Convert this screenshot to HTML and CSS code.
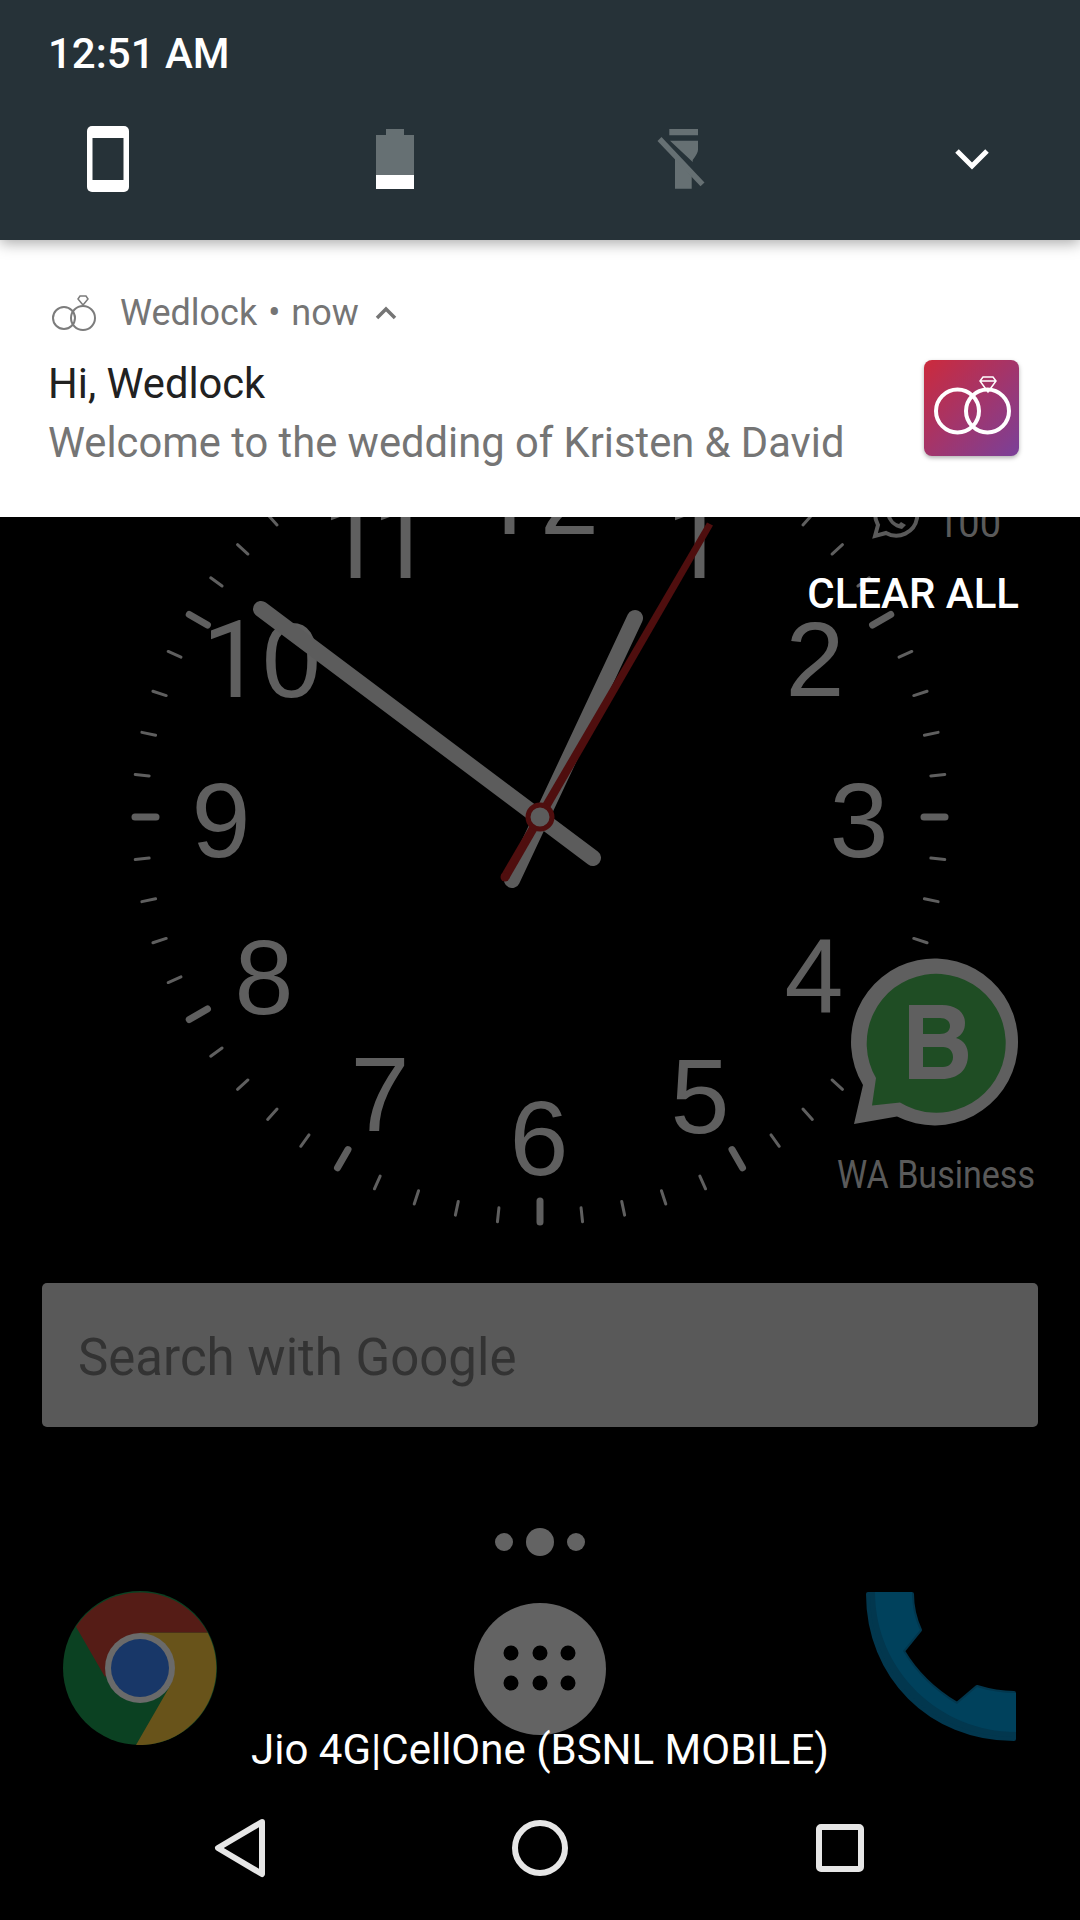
FILE: index.html
```html
<!DOCTYPE html>
<html lang="en">
<head>
<meta charset="utf-8">
<title>Notification shade</title>
<link rel="stylesheet" href="styles.css">
</head>
<body>
<div class="screen">
  <div class="home">
    <svg class="wallpaper" viewBox="0 0 1080 1283" width="1080" height="1283">
      <defs>
        <line id="tick" class="tick" x1="540" y1="410" x2="540" y2="424"/>
        <line id="hourtick" class="hourtick" x1="540" y1="412" x2="540" y2="433"/>
      </defs>
      <g>
        <use href="#hourtick" transform="rotate(0 540 817)"/><use href="#tick" transform="rotate(6 540 817)"/><use href="#tick" transform="rotate(12 540 817)"/><use href="#tick" transform="rotate(18 540 817)"/><use href="#tick" transform="rotate(24 540 817)"/>
        <use href="#hourtick" transform="rotate(30 540 817)"/><use href="#tick" transform="rotate(36 540 817)"/><use href="#tick" transform="rotate(42 540 817)"/><use href="#tick" transform="rotate(48 540 817)"/><use href="#tick" transform="rotate(54 540 817)"/>
        <use href="#hourtick" transform="rotate(60 540 817)"/><use href="#tick" transform="rotate(66 540 817)"/><use href="#tick" transform="rotate(72 540 817)"/><use href="#tick" transform="rotate(78 540 817)"/><use href="#tick" transform="rotate(84 540 817)"/>
        <use href="#hourtick" transform="rotate(90 540 817)"/><use href="#tick" transform="rotate(96 540 817)"/><use href="#tick" transform="rotate(102 540 817)"/><use href="#tick" transform="rotate(108 540 817)"/><use href="#tick" transform="rotate(114 540 817)"/>
        <use href="#hourtick" transform="rotate(120 540 817)"/><use href="#tick" transform="rotate(126 540 817)"/><use href="#tick" transform="rotate(132 540 817)"/><use href="#tick" transform="rotate(138 540 817)"/><use href="#tick" transform="rotate(144 540 817)"/>
        <use href="#hourtick" transform="rotate(150 540 817)"/><use href="#tick" transform="rotate(156 540 817)"/><use href="#tick" transform="rotate(162 540 817)"/><use href="#tick" transform="rotate(168 540 817)"/><use href="#tick" transform="rotate(174 540 817)"/>
        <use href="#hourtick" transform="rotate(180 540 817)"/><use href="#tick" transform="rotate(186 540 817)"/><use href="#tick" transform="rotate(192 540 817)"/><use href="#tick" transform="rotate(198 540 817)"/><use href="#tick" transform="rotate(204 540 817)"/>
        <use href="#hourtick" transform="rotate(210 540 817)"/><use href="#tick" transform="rotate(216 540 817)"/><use href="#tick" transform="rotate(222 540 817)"/><use href="#tick" transform="rotate(228 540 817)"/><use href="#tick" transform="rotate(234 540 817)"/>
        <use href="#hourtick" transform="rotate(240 540 817)"/><use href="#tick" transform="rotate(246 540 817)"/><use href="#tick" transform="rotate(252 540 817)"/><use href="#tick" transform="rotate(258 540 817)"/><use href="#tick" transform="rotate(264 540 817)"/>
        <use href="#hourtick" transform="rotate(270 540 817)"/><use href="#tick" transform="rotate(276 540 817)"/><use href="#tick" transform="rotate(282 540 817)"/><use href="#tick" transform="rotate(288 540 817)"/><use href="#tick" transform="rotate(294 540 817)"/>
        <use href="#hourtick" transform="rotate(300 540 817)"/><use href="#tick" transform="rotate(306 540 817)"/><use href="#tick" transform="rotate(312 540 817)"/><use href="#tick" transform="rotate(318 540 817)"/><use href="#tick" transform="rotate(324 540 817)"/>
        <use href="#hourtick" transform="rotate(330 540 817)"/><use href="#tick" transform="rotate(336 540 817)"/><use href="#tick" transform="rotate(342 540 817)"/><use href="#tick" transform="rotate(348 540 817)"/><use href="#tick" transform="rotate(354 540 817)"/>
      </g>
      <g class="numerals">
        <text class="start" x="476" y="534"><tspan class="one">1</tspan><tspan x="540">2</tspan></text>
        <text class="start one" x="666" y="578">1</text>
        <text x="815" y="696">2</text>
        <text x="859" y="857">3</text>
        <text x="814" y="1013">4</text>
        <text x="700" y="1133">5</text>
        <text x="539" y="1175">6</text>
        <text x="380" y="1131">7</text>
        <text x="264" y="1014">8</text>
        <text x="221" y="857">9</text>
        <text class="start" x="202" y="697"><tspan class="one">1</tspan><tspan x="262">0</tspan></text>
        <text class="start one" x="322" y="578">1<tspan x="372">1</tspan></text>
      </g>
      <line class="hand" x1="593" y1="858" x2="261" y2="609"/>
      <line class="hand" x1="512" y1="880" x2="635" y2="618"/>
      <polygon class="second" points="501,875 509,879 713,525.500 707,522.500"/>
      <circle class="second" cx="505" cy="877" r="4.500"/>
      <circle class="hub" cx="540" cy="817" r="12"/>
      <text class="counter" x="937" y="537">100</text>
      <path class="wa-outline" d="M875 536l3-11a21 21 0 1 1 8 8z"/>
      <path class="wa-outline-glyph" d="M886 513c1 8 8 15 16 16l4-4-5-3-2 2c-4-1-7-4-8-8l2-2-3-5z"/>
      <path class="wa-ring" d="M854 1124L863 1085A83.500 83.500 0 1 1 897 1116.500Z"/>
      <path class="wa-fill" d="M872 1105.500L876 1078A69.500 69.500 0 1 1 900 1102.600Z"/>
      <path class="wa-b" fill-rule="evenodd" d="M909 1005h33c15 0 23 8 23 18 0 7-3 12-9 15 8 2 12 9 12 17 0 15-10 24-26 24h-33zM923 1018v16h17c6 0 10-3 10-8s-4-8-10-8zM923 1047v20h20c6 0 10-4 10-10s-4-10-10-10z"/>
      <text class="wa-label" x="936" y="1188" textLength="198" lengthAdjust="spacingAndGlyphs">WA Business</text>
    </svg>

    <div class="search">Search with Google</div>

    <div class="pager">
      <span class="dot"></span>
      <span class="dot dot-active"></span>
      <span class="dot"></span>
    </div>

    <div class="dock">
      <svg class="chrome" viewBox="0 0 155 155" width="155" height="155">
        <circle cx="77" cy="77" r="77" fill="#0b4122"/>
        <path d="M13 35.700A77 77 0 0 1 144.700 41.700H77L42 86Z" fill="#551c16"/>
        <path d="M144.700 41.700A77 77 0 0 1 73 154L107 95L77 41.700Z" fill="#68531a"/>
        <circle cx="77" cy="77" r="35" fill="#6a6a6a"/>
        <circle cx="77" cy="77" r="29" fill="#183768"/>
      </svg>
      <svg class="drawer" viewBox="0 0 132 132" width="132" height="132">
        <circle cx="66" cy="66" r="66" fill="#636363"/>
        <circle cx="37" cy="50" r="7.500"/><circle cx="66" cy="50" r="7.500"/><circle cx="94" cy="50" r="7.500"/>
        <circle cx="37" cy="80" r="7.500"/><circle cx="66" cy="80" r="7.500"/><circle cx="94" cy="80" r="7.500"/>
      </svg>
      <svg class="phone" viewBox="0 0 152 152" width="152" height="152">
        <path class="phone-back" d="M3 3H47C47 16 50 28 55 39L38 60C51 82 70 100 92 113L112 96C125 100 138 102 149 102V148C65 148 3 85 3 3Z"/>
        <path class="phone-front" d="M10 1H47C47 16 50 28 55 39L38 60C51 82 70 100 92 113L112 96C125 100 138 102 151 102V141C75 141 10 80 10 1Z"/>
      </svg>
    </div>

    <div class="carrier">Jio 4G|CellOne (BSNL MOBILE)</div>

    <nav class="nav">
      <svg viewBox="0 0 56 62" width="56" height="62"><path class="nav-stroke" d="M50 5L6 31l44 26z"/></svg>
      <svg viewBox="0 0 62 62" width="62" height="62"><circle class="nav-stroke" cx="31" cy="31" r="25"/></svg>
      <svg viewBox="0 0 56 56" width="56" height="56"><rect class="nav-stroke" x="7" y="7" width="42" height="42" rx="2"/></svg>
    </nav>
  </div>

  <div class="shade">
    <header class="qs">
      <div class="clock">12:51 AM</div>
      <div class="qs-row">
        <svg viewBox="0 0 42 66" width="42" height="66">
          <rect x="0" y="0" width="42" height="66" rx="5" fill="#fff"/>
          <rect x="5.500" y="12" width="31" height="42" fill="#263238"/>
        </svg>
        <svg viewBox="0 0 38 60" width="38" height="60">
          <path d="M10 0h18v6h10v54H0V6h10z" fill="#667073"/>
          <rect x="0" y="46" width="38" height="14" fill="#fff"/>
        </svg>
        <svg viewBox="0 0 48 61" width="48" height="61">
          <path class="flash" d="M12.300 0H41V6.300H12.300zM13 11.700H41V20.700Q41 24 35.700 31V33zM18 29L34.700 47.300V59.700H18z"/>
          <path class="slash" d="M2.500 10L45.500 55.300"/>
        </svg>
        <svg viewBox="0 0 36 24" width="36" height="24"><path class="chev" d="M3 4l15 15L33 4"/></svg>
      </div>
    </header>

    <section class="note">
      <div class="note-head">
        <svg viewBox="0 0 46 36" width="46" height="36" class="rings-small">
          <circle cx="12" cy="23" r="11"/>
          <circle cx="31" cy="23" r="12"/>
          <path class="rings-gem" d="M28 1h6l2 3-5 6-5-6z"/>
        </svg>
        <span class="note-app">Wedlock</span>
        <span class="note-dot">•</span>
        <span class="note-app">now</span>
        <svg viewBox="0 0 22 14" width="22" height="14" class="note-chev"><path d="M2 12l9-9 9 9"/></svg>
      </div>
      <div class="note-body">
        <div class="note-text">
          <div class="note-title">Hi, Wedlock</div>
          <div class="note-msg">Welcome to the wedding of Kristen &amp; David</div>
        </div>
        <svg class="note-icon" viewBox="0 0 95 96" width="95" height="96">
          <defs>
            <linearGradient id="g" x1="0" y1="0" x2="1" y2="1">
              <stop offset="0" stop-color="#cc2a3c"/>
              <stop offset="1" stop-color="#7a4099"/>
            </linearGradient>
          </defs>
          <rect width="95" height="96" rx="8" fill="url(#g)"/>
          <g class="rings-big">
            <circle cx="33.500" cy="51" r="21.500"/>
            <circle cx="63.500" cy="51" r="21.500"/>
          </g>
          <path class="diamond" d="M59 17h10l3 4-8 11-8-11zM56 21h16"/>
        </svg>
      </div>
    </section>

    <div class="clear">CLEAR ALL</div>
  </div>
</div>
</body>
</html>
```

FILE: styles.css
```css
* { box-sizing: border-box; }
html, body { margin: 0; padding: 0; background: #000; }
.screen { position: relative; width: 1080px; height: 1920px; overflow: hidden; background: #000; font-family: Roboto, "Liberation Sans", sans-serif; }

.home { position: absolute; inset: 0; display: flex; flex-direction: column; }
.wallpaper { display: block; flex: none; }
.tick { stroke: #5f5f5f; stroke-width: 3; stroke-linecap: round; }
.hourtick { stroke: #5f5f5f; stroke-width: 7; stroke-linecap: round; }
.numerals text { font-family: "Liberation Sans", Arial, sans-serif; font-size: 106px; fill: #5f5f5f; text-anchor: middle; }
.numerals text.start { text-anchor: start; }
.numerals .one { font-family: Roboto, sans-serif; font-size: 108px; }
.hand { stroke: #5c5c5c; stroke-width: 16; stroke-linecap: round; }
.second { fill: #4f0e0e; }
.hub { fill: #5c5c5c; stroke: #4f0e0e; stroke-width: 5; }
.counter { font-family: Roboto, sans-serif; font-size: 38px; fill: #5a5a5a; }
.wa-outline { fill: none; stroke: #5a5a5a; stroke-width: 4; }
.wa-outline-glyph { fill: #5a5a5a; }
.wa-ring { fill: #5f5f5f; }
.wa-fill { fill: #1f4d24; }
.wa-b { fill: #5f5f5f; }
.wa-label { font-family: Roboto, sans-serif; font-size: 38px; fill: #5a5a5a; text-anchor: middle; }

.search { flex: none; height: 144px; margin: 0 42px; padding: 4px 0 0 36px; display: flex; align-items: center; background: #595959; border-radius: 5px; color: #333; font-size: 51px; }

.pager { flex: none; height: 28px; margin-top: 101px; display: flex; justify-content: center; align-items: center; gap: 13px; }
.dot { width: 18px; height: 18px; border-radius: 50%; background: #636363; }
.dot-active { width: 28px; height: 28px; }

.dock { flex: none; margin-top: 35px; padding: 0 63px; display: grid; grid-template-columns: 1fr auto 1fr; align-items: center; }
.chrome { justify-self: start; display: block; }
.drawer { justify-self: center; display: block; }
.phone { justify-self: end; align-self: start; display: block; }
.phone-back { fill: #02374e; stroke: #02374e; stroke-width: 4; stroke-linejoin: round; }
.phone-front { fill: #00415c; }

.carrier { position: absolute; left: 0; right: 0; top: 1726px; text-align: center; color: #fff; font-size: 42px; line-height: 47px; }

.nav { flex: none; margin-top: auto; height: 130px; padding: 0 90px 14px; display: grid; grid-template-columns: repeat(3, 1fr); justify-items: center; align-items: center; }
.nav-stroke { fill: none; stroke: #e6e6e6; stroke-width: 6; stroke-linejoin: round; }

.shade { position: absolute; left: 0; top: 0; width: 1080px; }
.qs { position: relative; z-index: 1; height: 240px; background: #263238; box-shadow: 0 3px 14px rgba(0,0,0,0.35); color: #fff; }
.clock { padding: 31px 0 0 48px; font-size: 42px; line-height: 46px; font-weight: 500; }
.qs-row { margin-top: 49px; padding-left: 87px; display: grid; grid-template-columns: 289px 281px 297px auto; justify-items: start; align-items: center; }
.flash { fill: #667073; }
.slash { stroke: #667073; stroke-width: 5.500; fill: none; }
.chev { fill: none; stroke: #fff; stroke-width: 5; }

.note { height: 277px; background: #fff; padding: 53px 61px 0 48px; display: flex; flex-direction: column; }
.note-head { display: flex; align-items: center; height: 40px; color: #757575; font-size: 36px; }
.rings-small { margin: 0 22px 0 4px; fill: none; stroke: #7c7c7c; stroke-width: 2; }
.rings-gem { stroke-width: 1.500; }
.note-dot { margin: 0 11px; font-size: 36px; }
.note-chev { margin-left: 16px; fill: none; stroke: #757575; stroke-width: 3.500; }
.note-body { margin-top: 27px; display: flex; justify-content: space-between; align-items: flex-start; }
.note-text { margin-top: -1px; }
.note-title { color: #212121; font-size: 41.700px; line-height: 50px; }
.note-msg { color: #757575; font-size: 41.700px; line-height: 68px; }
.rings-big { fill: none; stroke: #fff; stroke-width: 4; }
.diamond { fill: none; stroke: #fff; stroke-width: 1.500; }
.note-icon { display: block; filter: drop-shadow(0 2px 2px rgba(0,0,0,0.3)); }

.clear { padding: 53px 61px 0 0; text-align: right; color: #fff; font-size: 42px; font-weight: 500; line-height: 47px; }
```
